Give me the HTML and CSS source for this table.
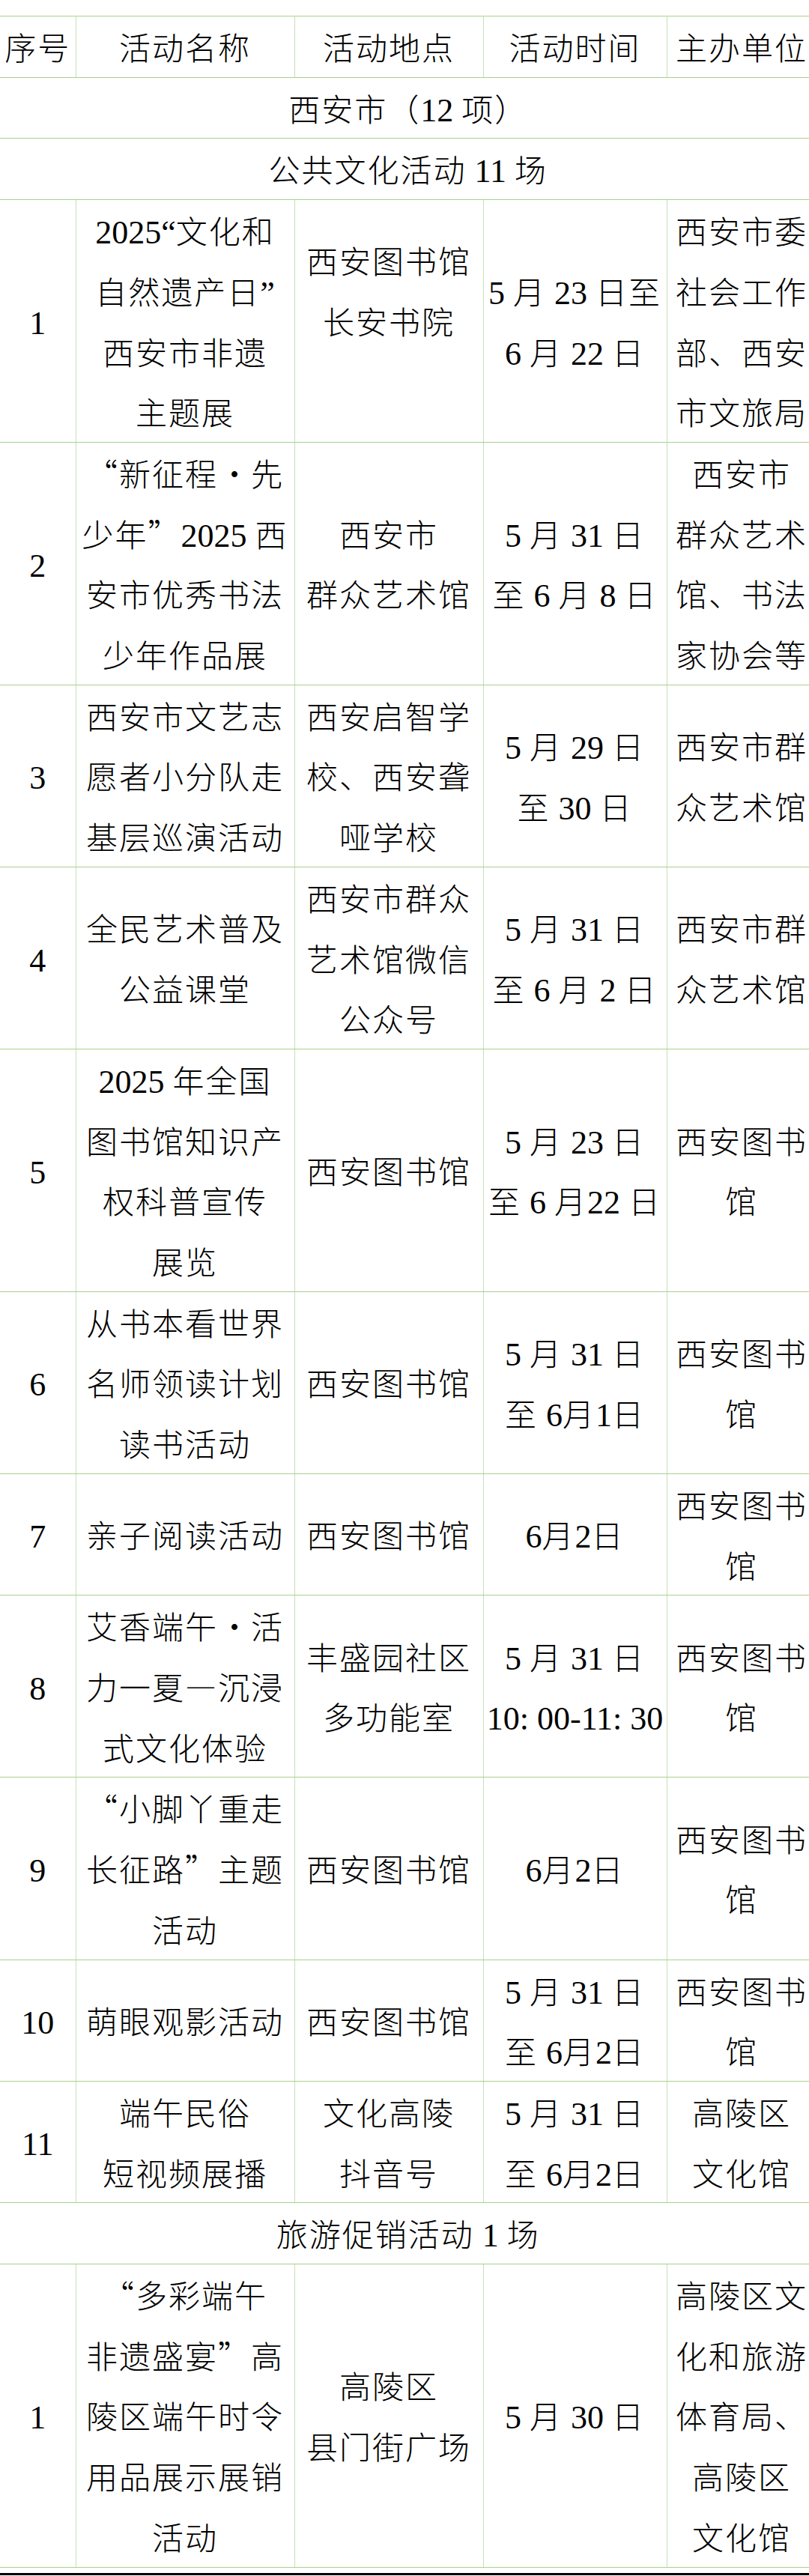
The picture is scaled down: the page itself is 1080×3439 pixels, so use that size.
FILE: index.html
```html
<!DOCTYPE html>
<html lang="zh-CN">
<head>
<meta charset="utf-8">
<title>端午活动安排表</title>
<link rel="stylesheet" href="styles.css">
</head>
<body>
<main class="page">
<table class="sched">
<colgroup><col class="c1"><col class="c2"><col class="c3"><col class="c4"><col class="c5"></colgroup>
<tbody>
<tr><td>序号</td><td>活动名称</td><td>活动地点</td><td>活动时间</td><td>主办单位</td></tr>
<tr><td colspan="5" class="sec">西安市（<span class="n">12 </span>项）</td></tr>
<tr><td colspan="5" class="sec">公共文化活动<span class="n"> 11 </span>场</td></tr>
<tr>
<td><span class="n">1</span></td>
<td><span class="n">2025</span><span class="pq">“</span>文化和<br>自然遗产日<span class="pq">”</span><br>西安市非遗<br>主题展</td>
<td>西安图书馆<br>长安书院<br><br></td>
<td><span class="n">5 </span>月<span class="n"> 23 </span>日至<br><span class="n">6 </span>月<span class="n"> 22 </span>日</td>
<td>西安市委<br>社会工作<br>部、西安<br>市文旅局</td>
</tr>
<tr>
<td><span class="n">2</span></td>
<td>“新征程<span class="dot">·</span>先<br>少年”<span class="n">2025 </span>西<br>安市优秀书法<br>少年作品展</td>
<td>西安市<br>群众艺术馆</td>
<td><span class="n">5 </span>月<span class="n"> 31 </span>日<br>至<span class="n"> 6 </span>月<span class="n"> 8 </span>日</td>
<td>西安市<br>群众艺术<br>馆、书法<br>家协会等</td>
</tr>
<tr>
<td><span class="n">3</span></td>
<td>西安市文艺志<br>愿者小分队走<br>基层巡演活动</td>
<td>西安启智学<br>校、西安聋<br>哑学校</td>
<td><span class="n">5 </span>月<span class="n"> 29 </span>日<br>至<span class="n"> 30 </span>日</td>
<td>西安市群<br>众艺术馆</td>
</tr>
<tr>
<td><span class="n">4</span></td>
<td>全民艺术普及<br>公益课堂</td>
<td>西安市群众<br>艺术馆微信<br>公众号</td>
<td><span class="n">5 </span>月<span class="n"> 31 </span>日<br>至<span class="n"> 6 </span>月<span class="n"> 2 </span>日</td>
<td>西安市群<br>众艺术馆</td>
</tr>
<tr>
<td><span class="n">5</span></td>
<td><span class="n">2025 </span>年全国<br>图书馆知识产<br>权科普宣传<br>展览</td>
<td>西安图书馆</td>
<td><span class="n">5 </span>月<span class="n"> 23 </span>日<br>至<span class="n"> 6 </span>月<span class="n">22 </span>日</td>
<td>西安图书<br>馆</td>
</tr>
<tr>
<td><span class="n">6</span></td>
<td>从书本看世界<br>名师领读计划<br>读书活动</td>
<td>西安图书馆</td>
<td><span class="n">5 </span>月<span class="n"> 31 </span>日<br>至<span class="n"> 6</span>月<span class="n">1</span>日</td>
<td>西安图书<br>馆</td>
</tr>
<tr>
<td><span class="n">7</span></td>
<td>亲子阅读活动</td>
<td>西安图书馆</td>
<td><span class="n">6</span>月<span class="n">2</span>日</td>
<td>西安图书<br>馆</td>
</tr>
<tr>
<td><span class="n">8</span></td>
<td>艾香端午<span class="dot">·</span>活<br>力一夏—沉浸<br>式文化体验</td>
<td>丰盛园社区<br>多功能室</td>
<td><span class="n">5 </span>月<span class="n"> 31 </span>日<br><span class="n">10: 00-11: 30</span></td>
<td>西安图书<br>馆</td>
</tr>
<tr>
<td><span class="n">9</span></td>
<td>“小脚丫重走<br>长征路”主题<br>活动</td>
<td>西安图书馆</td>
<td><span class="n">6</span>月<span class="n">2</span>日</td>
<td>西安图书<br>馆</td>
</tr>
<tr>
<td><span class="n">10</span></td>
<td>萌眼观影活动</td>
<td>西安图书馆</td>
<td><span class="n">5 </span>月<span class="n"> 31 </span>日<br>至<span class="n"> 6</span>月<span class="n">2</span>日</td>
<td>西安图书<br>馆</td>
</tr>
<tr>
<td><span class="n">11</span></td>
<td>端午民俗<br>短视频展播</td>
<td>文化高陵<br>抖音号</td>
<td><span class="n">5 </span>月<span class="n"> 31 </span>日<br>至<span class="n"> 6</span>月<span class="n">2</span>日</td>
<td>高陵区<br>文化馆</td>
</tr>
<tr><td colspan="5" class="sec">旅游促销活动<span class="n"> 1 </span>场</td></tr>
<tr>
<td><span class="n">1</span></td>
<td>“多彩端午<br>非遗盛宴”高<br>陵区端午时令<br>用品展示展销<br>活动</td>
<td>高陵区<br>县门街广场</td>
<td><span class="n">5 </span>月<span class="n"> 30 </span>日</td>
<td>高陵区文<br>化和旅游<br>体育局、<br>高陵区<br>文化馆</td>
</tr>
</tbody>
</table>
<div class="endrule"></div>
</main>
</body>
</html>
```
FILE: styles.css
```css
html, body {
  margin: 0;
  padding: 0;
  background: #ffffff;
  overflow: hidden;
}

.page {
  width: 1090px;
  padding-top: 21px;
}

.sched {
  width: 1090px;
  border-collapse: collapse;
  table-layout: fixed;
  font-family: "Noto Sans CJK SC", "Liberation Serif", sans-serif;
  font-size: 42px;
  font-weight: 300;
  letter-spacing: 2px;
  line-height: 80.7px;
  color: #000000;
  font-feature-settings: "fwid" 1;
}

.c1 { width: 101px; }
.c2 { width: 292px; }
.c3 { width: 252px; }
.c4 { width: 245px; }
.c5 { width: 200px; }

.sched td {
  padding: 0 2px;
  text-align: center;
  vertical-align: middle;
  white-space: nowrap;
  border-top: 1px solid #a8d08d;
  border-bottom: 1px solid #a8d08d;
  border-left: 1px solid #c5e0b3;
  border-right: 1px solid #c5e0b3;
}

.sched td:first-child {
  border-left: none;
}

.n {
  font-family: "Liberation Serif", serif;
  font-size: 44px;
  font-weight: 400;
  line-height: 1;
  letter-spacing: 0;
  font-feature-settings: normal;
}

.pq {
  font-family: "Liberation Serif", serif;
  font-size: 44px;
  font-weight: 400;
  line-height: 1;
  letter-spacing: 0;
  font-feature-settings: normal;
}

.dot {
  display: inline-block;
  width: 44px;
  line-height: 1;
  text-align: center;
  letter-spacing: 0;
}

.endrule {
  width: 1080px;
  height: 3px;
  margin-top: 7px;
  background: #000000;
}
```
